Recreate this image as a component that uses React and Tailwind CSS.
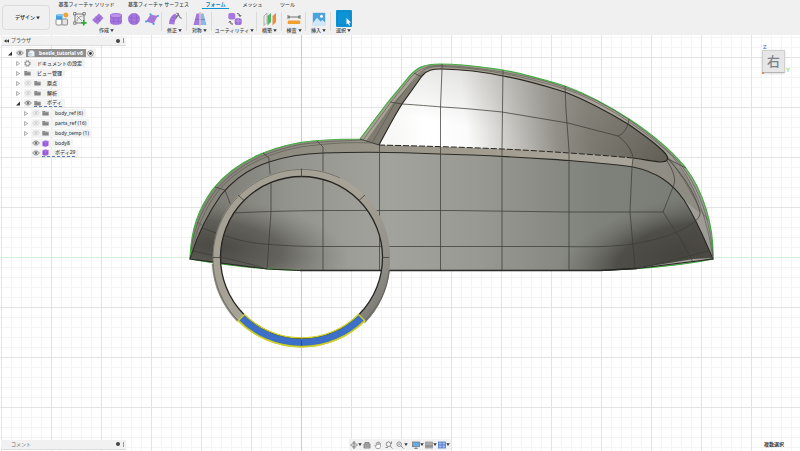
import React from "react";

const PURPLE = "#a678de";

function Caret({ className = "h-[4px] w-[5px]" }) {
  return (
    <svg viewBox="0 0 5 4" className={className} aria-hidden="true">
      <path d="M0.2 0.2H4.8L2.5 3.9Z" fill="#333" />
    </svg>
  );
}

/* ---------- toolbar icons ---------- */

function BoxIcon() {
  return (
    <svg viewBox="0 0 14 14" className="size-[14px]">
      <rect x="1" y="7" width="6" height="6" rx="1" fill="#fafafa" stroke="#777" strokeWidth=".8" />
      <rect x="7" y="7" width="5.5" height="6" rx="1" fill="#e4e4e4" stroke="#777" strokeWidth=".8" />
      <rect x="1" y="2.5" width="6.5" height="5" rx="1" fill="#3b9fdc" />
      <path d="M1 4.200L3 2H8.500L7.500 4.200Z" fill="#80c6ee" />
      <circle cx="10.800" cy="3" r="2.300" fill="#f59a23" />
      <path d="M10.800 0V6M7.800 3H13.800M8.700 .9L12.900 5.100M12.900 .9L8.700 5.100" stroke="#f7a540" strokeWidth=".7" />
    </svg>
  );
}
function SketchIcon() {
  return (
    <svg viewBox="0 0 14 14" className="size-[14px]" fill="none">
      <path d="M2 2H11V8M2 2V11H8" stroke="#555" strokeWidth=".8" />
      <path d="M4 9.500C4 6 6 4.500 9.500 4M4 4L9 9" stroke="#777" strokeWidth=".7" />
      <g fill="#fff" stroke="#555" strokeWidth=".7">
        <rect x=".7" y=".7" width="2.200" height="2.200" />
        <rect x="10" y=".7" width="2.200" height="2.200" />
        <rect x=".7" y="10" width="2.200" height="2.200" />
      </g>
      <path d="M10.800 8V13.600M8 10.800H13.600" stroke="#2fa43a" strokeWidth="1.700" />
    </svg>
  );
}
function PlaneIcon() {
  return (
    <svg viewBox="0 0 14 14" className="size-[14px]">
      <path d="M1 8L8 1.500L12.500 6L6.500 12.500Z" fill={PURPLE} />
      <path d="M4.500 4.700L9.500 9.300M3.500 10.200L10.300 3.700" stroke="#8554c6" strokeWidth=".6" />
    </svg>
  );
}
function CylinderIcon() {
  return (
    <svg viewBox="0 0 14 14" className="size-[14px]">
      <path d="M1 3.500C1 .3 13 .3 13 3.500V10.500C13 13.700 1 13.700 1 10.500Z" fill={PURPLE} />
      <ellipse cx="7" cy="3.500" rx="5" ry="1.600" fill="#bb95e8" />
      <path d="M1 4.500C2 6.500 12 6.500 13 4.500M1 8.500C3 10 11 10 13 8.500M4.700 5.800V12.500M9.300 5.800V12.500" stroke="#8b5ccb" strokeWidth=".6" fill="none" />
    </svg>
  );
}
function SphereIcon() {
  return (
    <svg viewBox="0 0 14 14" className="size-[14px]">
      <circle cx="7" cy="7" r="6" fill={PURPLE} />
      <path d="M1.500 5C4 6.500 10 6.500 12.500 5M1.500 9C4 10.500 10 10.500 12.500 9M5 1.500C4 5 4 9 5 12.500M9 1.500C10 5 10 9 9 12.500" stroke="#8b5ccb" strokeWidth=".6" fill="none" />
    </svg>
  );
}
function FaceIcon() {
  return (
    <svg viewBox="0 0 14 14" className="size-[14px]">
      <path d="M5.500 2.500L12.800 4L8.500 11.800L1 9.500Z" fill={PURPLE} />
      <g fill="#3aa0e0">
        <rect x="4.600" y="1.400" width="1.800" height="1.800" />
        <rect x="11.900" y="3" width="1.800" height="1.800" />
        <rect x="7.700" y="11" width="1.800" height="1.800" />
        <rect x=".2" y="8.600" width="1.800" height="1.800" />
      </g>
    </svg>
  );
}
function ModifyIcon() {
  return (
    <svg viewBox="0 0 14 14" className="size-[14px]">
      <path d="M1 12C1 7 3 3.500 7 1.500L10 4.500C7.500 6.500 6.500 9 6.500 12.500Z" fill={PURPLE} />
      <path d="M8 6.500L10.300 2L11.500 5L13.500 6.500M10.300 2L8.500 1" stroke="#777" strokeWidth="1.100" fill="none" />
      <path d="M2 8L7 9M4 4.500L8 7" stroke="#8b5ccb" strokeWidth=".6" />
    </svg>
  );
}
function SymmetryIcon() {
  return (
    <svg viewBox="0 0 14 14" className="size-[14px]">
      <path d="M3.500 1.500H6.300V13H.5Z" fill={PURPLE} />
      <path d="M7.700 1.500H10.500L13.500 13H7.700Z" fill="#86b9e6" />
      <path d="M7 0V14" stroke="#e07070" strokeWidth=".6" />
      <path d="M2 7.500H6.300M7.700 7.500H12" stroke="#765fc0" strokeWidth=".6" />
    </svg>
  );
}
function UtilityIcon() {
  return (
    <svg viewBox="0 0 14 14" className="size-[14px]">
      <rect x=".3" y="1" width="7" height="6.500" rx="2" fill={PURPLE} />
      <rect x="6.700" y="6.300" width="7" height="6.700" rx="2" fill="#9b68d8" />
      <path d="M10.200 7V13M6.700 9H13.700" stroke="#d3bdf2" strokeWidth=".6" />
      <path d="M9 1.700C11 1.500 12 2.500 12 4M10.800 3.200L12 4.600L13.200 3.200M5 12C3 12.300 2 11.300 2 9.600M.8 10.500L2 9.200L3.200 10.500" stroke="#444" strokeWidth=".9" fill="none" />
    </svg>
  );
}
function ConstructIcon() {
  return (
    <svg viewBox="0 0 14 14" className="size-[14px]">
      <path d="M1 4L4 1V10.500L1 13.500Z" fill="#eee" stroke="#888" strokeWidth=".6" />
      <path d="M4.500 4L8 1V10L4.500 13.500Z" fill="#4fb468" />
      <path d="M9.500 4L13 1V10L9.500 13.500Z" fill="#ec8b3c" />
    </svg>
  );
}
function InspectIcon() {
  return (
    <svg viewBox="0 0 14 14" className="size-[14px]">
      <path d="M1 3V7M13 3V7M1.500 5H12.500M3 3.800L1.500 5L3 6.200M11 3.800L12.500 5L11 6.200" stroke="#555" strokeWidth=".8" fill="none" />
      <rect x=".8" y="8.500" width="12.400" height="3.500" fill="#f0a030" />
    </svg>
  );
}
function InsertIcon() {
  return (
    <svg viewBox="0 0 14 14" className="size-[14px]">
      <rect x=".8" y=".8" width="12.400" height="12.400" fill="#4ba3de" />
      <circle cx="9.500" cy="4.200" r="1.500" fill="#fff" />
      <path d="M.8 11L5 5.800L8.500 9.500L10.500 8L13.200 10.500V13.200H.8Z" fill="#cfe7f7" />
    </svg>
  );
}
function SelectIcon() {
  return (
    <svg viewBox="0 0 16 17" className="h-[17px] w-[16px]">
      <rect width="16" height="17" rx="1" fill="#0e94d6" />
      <rect x="1.500" y="1.500" width="12.500" height="13" fill="none" stroke="#0b78b8" strokeWidth=".7" strokeDasharray="1.500 1" />
      <path d="M10.500 8V14.500L12 13.200L13 15.500L14 15L13 12.800L15 12.600Z" fill="#fff" />
    </svg>
  );
}

const GROUPS = [
  { label: "作成", width: "w-[111px]", icons: [BoxIcon, SketchIcon, PlaneIcon, CylinderIcon, SphereIcon, FaceIcon] },
  { label: "修正", width: "w-[25px]", icons: [ModifyIcon] },
  { label: "対称", width: "w-[25px]", icons: [SymmetryIcon] },
  { label: "ユーティリティ", width: "w-[45px]", icons: [UtilityIcon] },
  { label: "構築", width: "w-[25px]", icons: [ConstructIcon] },
  { label: "検査", width: "w-[24px]", icons: [InspectIcon] },
  { label: "挿入", width: "w-[25px]", icons: [InsertIcon] },
  { label: "選択", width: "w-[25px]", icons: [SelectIcon] },
];

const TABS = [
  { label: "基準フィーチャ ソリッド", box: "w-[71px]" },
  { label: "基準フィーチャ サーフェス", box: "w-[73px]" },
  { label: "フォーム", box: "mx-[7px] w-[27px]", active: true },
  { label: "メッシュ", box: "w-[33px]" },
  { label: "ツール", box: "ml-[7px] w-[23px]" },
];

function Header() {
  return (
    <header className="flex h-[35px] shrink-0 bg-[#f0f0f0] font-medium">
      <div className="flex w-[51px] shrink-0 items-start pt-[5px] pl-[2px]">
        <label className="relative flex h-[25px] w-[48px] items-center rounded-sm border border-[#dcdcdc]">
          <select aria-label="ワークスペース" className="h-full w-full appearance-none bg-transparent pl-[12px] font-bold outline-none">
            <option>デザイン</option>
          </select>
          <Caret className="pointer-events-none absolute right-[9px] h-[4px] w-[4px]" />
        </label>
      </div>
      <div className="flex flex-col">
        <nav className="flex h-[9px]">
          {TABS.map((t) => (
            <button
              key={t.label}
              className={`${t.box} flex items-center justify-center whitespace-nowrap border-b ${
                t.active ? "border-[#0e94d6] font-bold text-[#0e84c6]" : "border-transparent"
              }`}
            >
              {t.label}
            </button>
          ))}
        </nav>
        <div className="flex pt-px">
          {GROUPS.map((g) => (
            <section key={g.label} className={`${g.width} relative flex shrink-0 flex-col items-center`}>
              <div className="flex h-[17px] items-center gap-[4px]">
                {g.icons.map((Icon, i) => (
                  <button key={i} aria-label={g.label} className="flex">
                    <Icon />
                  </button>
                ))}
              </div>
              <button className="flex h-[7px] items-center gap-px whitespace-nowrap">
                {g.label}
                <Caret className="h-[3px] w-[4px]" />
              </button>
              {g.label !== "選択" && <i className="absolute top-[2px] right-0 h-[19px] w-px bg-[#dadada]" />}
            </section>
          ))}
        </div>
      </div>
    </header>
  );
}

/* ---------- browser tree ---------- */

function Eye({ hidden }) {
  return (
    <svg viewBox="0 0 8 6" className="h-[6px] w-[8px] shrink-0" fill="none" opacity={hidden ? 0.25 : 1}>
      <path d="M.7 3C2.200 .4 5.800 .4 7.300 3C5.800 5.600 2.200 5.600 .7 3Z" stroke="#777" strokeWidth=".8" />
      <circle cx="4" cy="3" r="1.400" fill="#777" />
      {hidden && <path d="M1.500 5.500L6.500 .5" stroke="#777" strokeWidth=".7" />}
    </svg>
  );
}
function NodeIcon({ kind }) {
  if (kind === "gear")
    return (
      <svg viewBox="0 0 8 8" className="size-[7px] shrink-0" fill="none">
        <circle cx="4" cy="4" r="2.400" stroke="#858585" strokeWidth="1.100" />
        <circle cx="4" cy="4" r="3.400" stroke="#858585" strokeWidth=".9" strokeDasharray="1.400 1.270" />
      </svg>
    );
  if (kind === "body")
    return (
      <svg viewBox="0 0 7 7" className="size-[7px] shrink-0">
        <path d="M.5 1.500L3 .4L6.500 1V5.500L4 6.700L.5 6Z" fill="#9656dd" />
        <path d="M.5 1.500L4 2L6.500 1M4 2V6.700" stroke="#c39cf0" strokeWidth=".5" fill="none" />
      </svg>
    );
  if (kind === "doc")
    return (
      <svg viewBox="0 0 7 7" className="size-[7px] shrink-0">
        <path d="M1.500 .5H5L6.500 2V6.500H1.500Z" fill="#e8eef5" />
        <path d="M.5 2.500H4V6H.5Z" fill="#c3d4e5" stroke="#fff" strokeWidth=".5" />
      </svg>
    );
  return (
    <svg viewBox="0 0 8 7" className="h-[6px] w-[7px] shrink-0">
      <path d="M.3 1.200H3.200L4 2H7.700V6.500H.3Z" fill="#858585" />
      <path d="M.3 2.700H7.700" stroke="#bbb" strokeWidth=".5" />
    </svg>
  );
}
function Toggle({ open }) {
  return (
    <svg viewBox="0 0 4 5" className="h-[5px] w-[4px]">
      {open ? <path d="M4 .5V4.500H0Z" fill="#333" /> : <path d="M.6 .5L3.500 2.500L.6 4.500Z" fill="#fff" stroke="#777" strokeWidth=".6" />}
    </svg>
  );
}

const ROWS = [
  { text: "ドキュメントの設定", pad: "pl-[15px]", kind: "gear", toggle: true },
  { text: "ビュー管理", pad: "pl-[15px]", kind: "folder", toggle: true },
  { text: "原点", pad: "pl-[15px]", kind: "folder", toggle: true, eye: "off" },
  { text: "解析", pad: "pl-[15px]", kind: "folder", toggle: true, eye: "off" },
  { text: "ボディ", pad: "pl-[15px]", kind: "folder", toggle: true, open: true, eye: "on", under: true },
  { text: "body_ref (6)", pad: "pl-[23px]", kind: "folder", toggle: true, eye: "off" },
  { text: "parts_ref (16)", pad: "pl-[23px]", kind: "folder", toggle: true, eye: "off" },
  { text: "body_temp (1)", pad: "pl-[23px]", kind: "folder", toggle: true, eye: "off" },
  { text: "body8", pad: "pl-[23px]", kind: "body", eye: "on" },
  { text: "ボディ29", pad: "pl-[23px]", kind: "body", eye: "on", under: true },
];

function PanelBar({ title, arrows }) {
  return (
    <div className="flex h-[10px] w-[125px] items-center border-b border-[#ddd] bg-[#f1f1f1] text-[#666]">
      <div className="flex w-[10px] justify-center">
        {arrows && (
          <svg viewBox="0 0 6 4" className="h-[4px] w-[5px]">
            <path d="M3 0V4L0 2ZM6 0V4L3 2Z" fill="#333" />
          </svg>
        )}
      </div>
      <span>{title}</span>
      <i className="ml-auto size-[4px] rounded-full bg-[#444]" />
      <i className="mr-[2px] ml-[3px] h-[5px] w-px bg-[#999]" />
    </div>
  );
}

function Browser() {
  return (
    <aside className="ml-px pt-px font-medium">
      <PanelBar title="ブラウザ" arrows />
      <ul className="pt-[2px]">
        <li className="flex h-[10px] items-center pl-[7px]">
          <Toggle open />
          <div className="ml-[4px] flex h-[8px] items-center bg-[#f2f2f2] pr-[2px]">
            <Eye />
            <div className="ml-[2px] flex h-[8px] w-[60px] items-center gap-[4px] bg-[#8f8f8f] pl-[2px] font-bold whitespace-nowrap text-white">
              <NodeIcon kind="doc" />
              beetle_tutorial v6
            </div>
            <svg viewBox="0 0 7 7" className="ml-px size-[7px]">
              <circle cx="3.500" cy="3.500" r="2.800" fill="#fff" stroke="#666" strokeWidth=".7" />
              <circle cx="3.500" cy="3.500" r="1.400" fill="#333" />
            </svg>
          </div>
        </li>
        {ROWS.map((r) => (
          <li key={r.text} className={`flex h-[10px] items-center ${r.pad}`}>
            <button aria-label={r.text} className="flex w-[4px]">
              {r.toggle && <Toggle open={r.open} />}
            </button>
            <div className="ml-[4px] flex h-[8px] items-center bg-[#f3f3f3] pr-[3px]">
              {r.eye && (
                <span className="mr-[2px] flex">
                  <Eye hidden={r.eye === "off"} />
                </span>
              )}
              <div className={`flex h-[8px] items-center gap-[6px] whitespace-nowrap ${r.under ? "border-b border-dashed border-[#5d78c8]" : ""}`}>
                <NodeIcon kind={r.kind} />
                <span>{r.text}</span>
              </div>
            </div>
          </li>
        ))}
      </ul>
    </aside>
  );
}

/* ---------- 3D canvas ---------- */

const BODY =
  "M190 259C191 230 198 209 213 189C232 165 260 150 300 142.500C320 139.500 340 139 360 139L388 102L408 78C417 67 424 64 440 64C463 64 482 67 503 70C525 74 545 80 565 86C589 95 609 106 629 119C652 134 671 150 685 167C703 190 714 225 713 259C680 266 640 269 600 270.500H300C260 269 222 265 190 259Z";
const SIDE =
  "M190 259C196 239 206 216 221 195C234 179 250 168 269 162C290 155 310 153.500 323 153C380 151 420 153 440 154C490 155 530 158 569 160.500C600 163 620 165 633 167C657 172 672 183 684 200C698 222 706 243 713 259L637 268.500L600 270.500H300L267 269Z";
const GLASS =
  "M379 145C388 128 395 115 402 104L422 76C427 70 432 69 442 69C465 69.500 484 72 503 76C526 80 545 86 565 92C588 101 608 112 628 124C641 133 654 142 663 151C670 158 669 162 660 162C650 161 642 159 633 158C600 155 586 154 569 153C545 151 520 150 502 149C460 147 420 146 379 145Z";

const MAJOR_X = Array.from({ length: 24 }, (_, i) => -198.5 + i * 50);
const MAJOR_Y = Array.from({ length: 16 }, (_, i) => -142.5 + i * 50);

function Viewport() {
  return (
    <svg viewBox="0 35 800 416" preserveAspectRatio="xMidYMid slice" className="absolute inset-0 h-full w-full" fill="none" aria-label="beetle_tutorial">
      <defs>
        <pattern id="minor" x="1" y="7" width="10" height="10" patternUnits="userSpaceOnUse">
          <path d="M.5 0V10M0 .5H10" stroke="#f4f4f4" strokeWidth="1" />
        </pattern>
        <linearGradient id="side" x1="190" x2="713" y1="0" y2="0" gradientUnits="userSpaceOnUse">
          <stop offset="0" stopColor="#77766f" />
          <stop offset=".2" stopColor="#94958f" />
          <stop offset=".38" stopColor="#a2a39c" />
          <stop offset=".55" stopColor="#989992" />
          <stop offset=".78" stopColor="#7f817b" />
          <stop offset="1" stopColor="#787a74" />
        </linearGradient>
        <radialGradient id="darkRight" cx="0" cy="0" r="1" gradientUnits="userSpaceOnUse" gradientTransform="translate(678 254) rotate(-14) scale(125 56)">
          <stop offset="0" stopColor="#45443e" />
          <stop offset=".5" stopColor="#4b4a44" stopOpacity=".92" />
          <stop offset="1" stopColor="#6c6b65" stopOpacity="0" />
        </radialGradient>
        <radialGradient id="darkLeft" cx="0" cy="0" r="1" gradientUnits="userSpaceOnUse" gradientTransform="translate(215 246) rotate(6) scale(135 50)">
          <stop offset="0" stopColor="#4a4943" />
          <stop offset=".5" stopColor="#55544e" stopOpacity=".75" />
          <stop offset="1" stopColor="#77766f" stopOpacity="0" />
        </radialGradient>
        <linearGradient id="glass" x1="395" y1="140" x2="662" y2="105" gradientUnits="userSpaceOnUse">
          <stop offset="0" stopColor="#f8f8f7" />
          <stop offset=".12" stopColor="#ffffff" />
          <stop offset=".27" stopColor="#fbfbfb" />
          <stop offset=".42" stopColor="#cbcac6" />
          <stop offset=".6" stopColor="#908e86" />
          <stop offset=".72" stopColor="#7c7970" />
          <stop offset="1" stopColor="#615e56" />
        </linearGradient>
        <linearGradient id="glassTop" x1="470" y1="66" x2="460" y2="125" gradientUnits="userSpaceOnUse">
          <stop offset="0" stopColor="#a5a49f" stopOpacity=".3" />
          <stop offset="1" stopColor="#a5a49f" stopOpacity="0" />
        </linearGradient>
        <linearGradient id="shell" x1="190" x2="713" y1="0" y2="0" gradientUnits="userSpaceOnUse">
          <stop offset="0" stopColor="#85837a" />
          <stop offset=".2" stopColor="#8f8d82" />
          <stop offset=".5" stopColor="#a09a8d" />
          <stop offset=".8" stopColor="#aaa59a" />
          <stop offset="1" stopColor="#9d9b95" />
        </linearGradient>
        <linearGradient id="ring" x1="215" y1="180" x2="388" y2="330" gradientUnits="userSpaceOnUse">
          <stop offset="0" stopColor="#a39f93" />
          <stop offset=".5" stopColor="#a8a397" />
          <stop offset=".8" stopColor="#908f88" />
          <stop offset="1" stopColor="#6a6963" />
        </linearGradient>
        <clipPath id="glassClip">
          <path d={GLASS} />
        </clipPath>
      </defs>

      <rect x="-400" y="-200" width="1600" height="900" fill="#fff" />
      <rect x="-400" y="-200" width="1600" height="900" fill="url(#minor)" />
      <g stroke="#e3e3e3">
        {MAJOR_X.map((x) => (
          <path key={x} d={`M${x} -200V700`} />
        ))}
        {MAJOR_Y.map((y) => (
          <path key={y} d={`M-400 ${y}H1200`} />
        ))}
      </g>
      <path d="M301.500 -200V700" stroke="#c3c6f6" />
      <path d="M-400 257.500H1200" stroke="#d3f1d3" />

      {/* shell, side panel and glass */}
      <path d={BODY} fill="url(#shell)" />
      <path d={SIDE} fill="url(#side)" />
      <path d={SIDE} fill="url(#darkLeft)" />
      <path d={SIDE} fill="url(#darkRight)" />
      <path d="M637 268.500L693 259L713 258C690 264 665 267 637 268.500Z" fill="#a3a19a" />
      <path d="M668 157C667 164 657 162 650 161.500L633 158V167C657 172 672 183 684 200L700 213C698 190 684 168 668 157Z" fill="#85837a" fillOpacity=".65" />
      <path d="M360 139L379 145C390 122 402 103 422 76L427 71L419 72L408 82L388 108Z" fill="#7f7b70" />
      <path d="M360 139L366 141L393 103L427 66C421 66 413 72 408 78L388 102Z" fill="#aaa497" />
      <path d={GLASS} fill="url(#glass)" />
      <path d={GLASS} fill="url(#glassTop)" clipPath="url(#glassClip)" />

      {/* silhouettes */}
      <path d={BODY} stroke="#3fae3f" strokeWidth="1.200" />
      <path d="M300 270.500H600L637 268.500" stroke="#222" strokeWidth="1.400" />
      <path d={SIDE} stroke="#2a2925" strokeWidth="1.100" />
      <path d="M379 145C388 128 395 115 402 104L422 76C427 70 432 69 442 69C465 69.500 484 72 503 76C526 80 545 86 565 92C588 101 608 112 628 124C641 133 654 142 663 151C670 158 669 162 660 162C650 161 642 159 633 158" stroke="#26251f" strokeWidth="1.200" />
      <path d="M379 145C420 146 460 147 502 149C545 151 600 155 633 158" stroke="#26251f" strokeWidth="1" strokeDasharray="6 2" />
      <path d="M360 139L379 145" stroke="#333" strokeWidth=".9" />

      {/* mesh lines */}
      <g stroke="#3d3c37" strokeWidth=".75">
        <path d="M263 153L269 158V162L271 183V212L267 269" />
        <path d="M317 141L323 147V270" />
        <path d="M379.500 145V270" />
        <path d="M442 64V69L440.500 107V270" />
        <path d="M503 70L502 149V270" />
        <path d="M565 86L566 110L569 150V270" />
        <path d="M629 119L628 124C626 130 623 134 618 136C626 142 632 150 633 158L632 167L630 212L635 268" />
        <path d="M215 187L225 190L231 206L235 213C250 212 280 211 323 210.500H450L569 212H663L673 187C677 180 673 170 667 161" />
        <path d="M663 212L680 238L693 262" />
        <path d="M202 228C230 238 245 243 270 244.500C290 246 305 246.500 323 246.500H560C590 247 612 247 633 244C655 240 668 236 677 232C690 226 701 219 700 212C694 190 681 173 668 159L686 168" />
        <path d="M193 251C220 257 245 262 267 269M708 251L670 261L637 268" />
        <path d="M390 102L402 104C418 105 430 106 442 107C462 108 482 110 502 112L568 123L618 136M414 73L422 77" />
      </g>
      <g stroke="#56544c" strokeWidth=".6">
        <path d="M191 256C196 230 204 209 219 190C238 168 265 154 300 147C330 143 350 142 372 143L395 103L418 74C426 67 434 66 442 66.500C480 68 520 75 565 89C600 101 636 124 668 152C693 177 707 216 713 259" />
        <path d="M191 250C195 224 204 205 216 190C238 164 265 152 300 144.500C325 141 345 141 363 140L391 102L412 76C420 68 430 65 442 65.500C480 67 530 75 565 87.500C605 101 645 127 678 161C700 188 710 220 713 256" />
        <path d="M668 157L684 180L703 214L708 220M197 222L203 226" />
      </g>

      {/* wheel arch ring */}
      <path d="M388.500 270.500A89.500 90.500 0 0 1 364 322" stroke="#77766f" strokeWidth="3" />
      <path d="M213 264A90 90.500 0 0 0 238 321" stroke="#8e8d86" strokeWidth="2.500" />
      <circle cx="301.500" cy="257.500" r="84.800" stroke="url(#ring)" strokeWidth="7.800" />
      <path d="M340 178A89 89 0 0 0 213 257.500A89 89 0 0 0 238 320.500" stroke="#6b6960" strokeWidth=".8" />
      <path d="M389 270.500C387 290 379 307 364.500 321" stroke="#66655f" strokeWidth=".9" />
      <circle cx="301.500" cy="257.500" r="81" stroke="#262521" strokeWidth="1.300" />
      <path d="M301.500 168.500V177M238 195L244 200.500M365 195L359 200.500M212.500 257.500H221M382 257.500H389M244 315L238 321M359 315L365 321" stroke="#3d3c37" strokeWidth=".8" />
      <path d="M240.500 318.500A86.300 87.500 0 0 0 362.500 318.500" stroke="#aeb52f" strokeWidth="7" />
      <path d="M241.500 317.500A84.600 84.600 0 0 0 361.500 317.500" stroke="#3b6fc8" strokeWidth="6.800" />
      <path d="M244.500 314.500A81 81 0 0 0 358.500 314.500L365 321A91 91 0 0 1 238 321Z" stroke="#d0d32a" strokeWidth="1.300" />
      <path d="M301.500 340V346" stroke="#345" strokeWidth=".8" />
    </svg>
  );
}

function ViewCube() {
  return (
    <div className="absolute top-[9px] right-[8px] flex h-[30px] w-[30px] flex-col">
      <span className="h-[6px] pl-px text-[6px]/[6px] font-bold text-[#7b8de8]">Z</span>
      <div className="flex items-end">
        <button className="flex size-[23px] items-center justify-center border border-[#cfcfcf] border-b-[#b5b5b5] bg-[#e6e6e6] text-[13px]/[13px] font-medium text-[#7c828a] shadow-sm">
          右
        </button>
        <span className="pl-px text-[6px]/[6px] font-bold text-[#9be39b]">Y</span>
      </div>
      <i className="-mt-px h-[2px] w-[2px] bg-[#d98b5a]" />
    </div>
  );
}

/* ---------- navigation bar ---------- */

function NavButton({ label, caret, children }) {
  return (
    <button aria-label={label} className="flex items-center">
      <svg viewBox="0 0 8 8" className="size-[8px]" fill="none" stroke="#777" strokeWidth=".8">
        {children}
      </svg>
      {caret && <Caret className="h-[3px] w-[4px]" />}
    </button>
  );
}

function NavBar() {
  return (
    <div className="flex h-[11px] items-center justify-center gap-px bg-[#f1f1f1] px-px">
      <NavButton label="オービット" caret>
        <path d="M4 .5V7.500M2.700 2L4 .5L5.300 2M2.700 6L4 7.500L5.300 6" />
        <ellipse cx="4" cy="4" rx="3.300" ry="1.300" />
      </NavButton>
      <NavButton label="ビュー正面">
        <path d="M1 3H7V7H1ZM2 3V1.500H6V3M1 5H7" fill="#bbb" />
      </NavButton>
      <span className="w-px" />
      <NavButton label="画面移動">
        <path d="M2.500 7.500L.8 4.500L2.300 5V2L3.300 1.500L4.300 .8L5.300 1.500L6.500 2.500V5.500L5.500 7.500ZM3.300 1.500V4M4.300 .8V4M5.300 1.500V4" fill="#fff" strokeWidth=".6" />
      </NavButton>
      <span className="w-px" />
      <NavButton label="ズーム">
        <circle cx="3.500" cy="3.200" r="2.300" />
        <path d="M5.200 5L7.500 7.500M6.500 .5V3M.5 6.500H3" />
      </NavButton>
      <span className="w-px" />
      <NavButton label="フィット" caret>
        <circle cx="3.200" cy="3.200" r="2.300" />
        <path d="M5 5L7.500 7.500M2.200 3.200H4.200" />
      </NavButton>
      <span className="w-[2px]" />
      <NavButton label="表示設定" caret>
        <rect x=".5" y="1" width="7" height="4.700" fill="#67aee6" />
        <path d="M4 6V7.500M2.200 7.500H5.800" />
      </NavButton>
      <NavButton label="グリッドとスナップ" caret>
        <rect x=".5" y="1" width="7" height="6" fill="#aaa" stroke="#999" />
        <path d="M.5 5H7.500" />
      </NavButton>
      <NavButton label="ビューポート" caret>
        <rect x=".5" y="1" width="7" height="6" fill="#9db8ea" stroke="#4b78cc" />
        <path d="M4 1V7M.5 4H7.500" stroke="#4b78cc" />
      </NavButton>
    </div>
  );
}

export default function App() {
  return (
    <div className="flex h-screen flex-col overflow-hidden bg-white font-['Noto_Sans','Noto_Sans_CJK_JP',sans-serif] text-[5px]/[7px] text-[#3f3f3f]">
      <Header />
      <main className="relative flex min-h-0 flex-1 flex-col">
        <Viewport />
        <div className="relative flex flex-1 flex-col justify-between">
          <Browser />
          <footer className="grid grid-cols-[1fr_auto_1fr] items-center pb-px">
            <div className="ml-px">
              <PanelBar title="コメント" />
            </div>
            <NavBar />
            <span className="pr-[16px] text-right font-bold">複数選択</span>
          </footer>
        </div>
        <ViewCube />
      </main>
    </div>
  );
}
